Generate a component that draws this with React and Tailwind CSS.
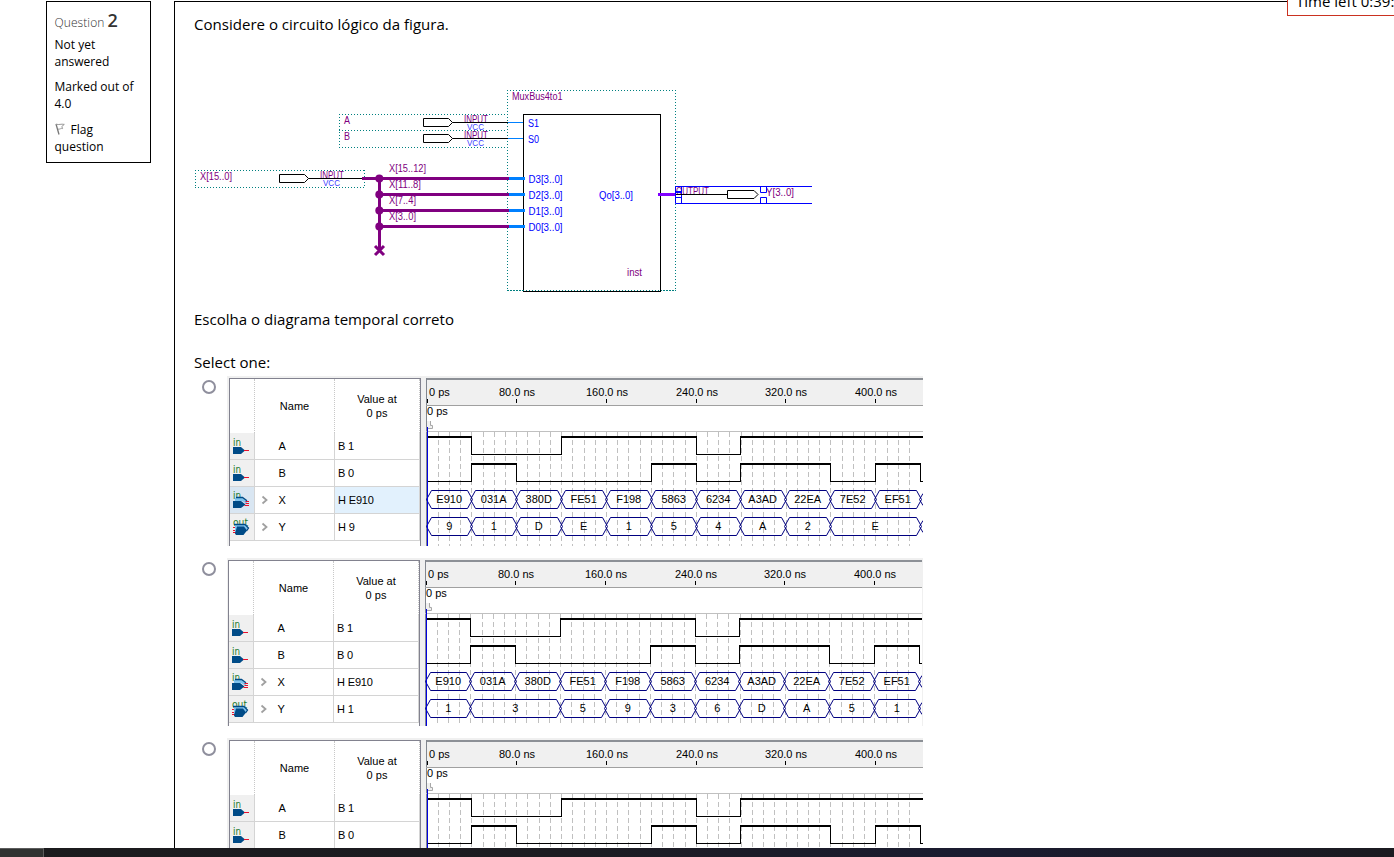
import React from "react";

const ARIAL = '"Liberation Sans", Arial, sans-serif';

/* ---------- Circuit schematic ---------- */

function Label({ x, y, w, fill = "#800080", size = 10, children }) {
  return (
    <text x={x} y={y} fill={fill} fontSize={size} fontFamily={ARIAL} textLength={w} lengthAdjust="spacingAndGlyphs">
      {children}
    </text>
  );
}

function InputPin({ x, y, end }) {
  return (
    <g>
      <Label x={x + 40.5} y={y + 0.5} w={24}>INPUT</Label>
      <Label x={x + 43.5} y={y + 7} w={17} size={9} fill="#3c3cff">VCC</Label>
      <path d={`M${x} ${y - 4}H${x + 25}L${x + 29} ${y}L${x + 25} ${y + 4}H${x}Z`} fill="#fff" stroke="#000" />
      <path d={`M${x + 29} ${y}H${end}`} stroke="#000" />
    </g>
  );
}

const BUS_ROWS = [
  { y: 178.5, net: "X[15..12]", netW: 37, port: "D3[3..0]" },
  { y: 194.5, net: "X[11..8]", netW: 32, port: "D2[3..0]" },
  { y: 210.5, net: "X[7..4]", netW: 27, port: "D1[3..0]" },
  { y: 226.5, net: "X[3..0]", netW: 27, port: "D0[3..0]" },
];

function Circuit() {
  return (
    <svg className="block" width="640" height="212" viewBox="194 85 640 212" fill="none">
      <g stroke="#008080" strokeDasharray="1 2" shapeRendering="crispEdges">
        <path d="M507 90.5H676M507 290.5H676M507.5 90V291M675.5 90V291" />
        <path d="M339 114.5H507M339 130.5H507M339 147.5H507M339.5 114V148" />
        <path d="M195 170.5H365M195 187.5H365M195.5 170V188M364.5 170V188" />
      </g>
      <rect x="523.5" y="114.5" width="137" height="177" fill="#fff" stroke="#000" />
      <path d="M508 290.5H675" stroke="#008080" strokeDasharray="1 2" shapeRendering="crispEdges" />

      <Label x={512} y={99.5} w={50.5}>MuxBus4to1</Label>
      <Label x={344} y={123.5} w={6}>A</Label>
      <Label x={344} y={139.5} w={6}>B</Label>
      <Label x={200} y={179.5} w={32}>X[15..0]</Label>
      <InputPin x={423.5} y={122.5} end={508} />
      <InputPin x={423.5} y={138.5} end={508} />
      <InputPin x={279.5} y={178.5} end={364} />
      <path d="M508 122.5H523M508 138.5H523" stroke="#0080ff" />
      <Label x={528} y={126.5} w={11} fill="#0000ff">S1</Label>
      <Label x={528} y={142.5} w={11} fill="#0000ff">S0</Label>

      <path d="M362 178.5H510M379.5 178V250" stroke="#800080" strokeWidth="3" />
      <path d="M375 246L384 255M384 246L375 255" stroke="#800080" strokeWidth="3" />
      {BUS_ROWS.map((r) => (
        <g key={r.port}>
          <path d={`M379 ${r.y}H510`} stroke="#800080" strokeWidth="3" />
          <path d={`M509 ${r.y}H525`} stroke="#0080ff" strokeWidth="3" />
          <circle cx="379.3" cy={r.y} r="4" fill="#800080" />
          <Label x={389} y={r.y - 7} w={r.netW}>{r.net}</Label>
          <Label x={528.5} y={r.y + 4} w={34} fill="#0000ff">{r.port}</Label>
        </g>
      ))}
      <Label x={599} y={198.5} w={34} fill="#0000ff">Qo[3..0]</Label>
      <Label x={627} y={275.5} w={15}>inst</Label>
      <path d="M658 194.5H676" stroke="#8000ff" strokeWidth="3" />

      <Label x={676} y={194.5} w={33}>OUTPUT</Label>
      <Label x={766} y={195.5} w={28}>Y[3..0]</Label>
      <g stroke="#0000ff">
        <path d="M812 186.5H675.5V203.5H812" />
        <path d="M681.5 186.5V203.5M676 191.5H681M676 197.5H681M676 192.5H681" />
        <path d="M760.5 187V192.5H766.5V187M760.5 203V197.5H766.5V203" />
      </g>
      <path d="M676 194.5H727M727.5 190.5H754L758 194.5L754 198.5H727.5Z" stroke="#000" />
    </svg>
  );
}

/* ---------- Waveform viewer ---------- */

function PinIcon({ kind }) {
  const label = kind === "out" ? "out" : "in";
  return (
    <svg className="block" width="24" height="26" viewBox="0 0 24 26">
      <text
        x={3}
        y={kind === "in" ? 13 : 12}
        fontSize={kind === "out" ? 10 : 11}
        fontFamily='"DejaVu Sans", sans-serif'
        fill="#1b7a2b"
        textLength={kind === "out" ? 15 : 8}
        lengthAdjust="spacingAndGlyphs"
      >
        {label}
      </text>
      {kind === "in" && (
        <g>
          <path d="M3 14H11L15 17.5L11 21H3Z" fill="#004b87" />
          <path d="M14 17.5H19" stroke="#e8112d" />
        </g>
      )}
      {kind === "bus" && (
        <g>
          <path d="M5 11H12.5L17 14V17L12 14H5Z" fill="#7fc4ee" />
          <path d="M6 10.5H12.5L17 13.8" stroke="#004b87" strokeWidth="1.3" fill="none" />
          <path d="M3 14H11L15.5 17.5L11 21H3Z" fill="#004b87" />
          <path d="M15.5 14.5H19M15.5 16.5H19M14.5 18.5H19" stroke="#e8112d" />
        </g>
      )}
      {kind === "out" && (
        <g>
          <path d="M3 13.5H6M3 16.5H6M3 18.5H6" stroke="#e8112d" />
          <path d="M5 10H15L18.5 13.5L15 18H5Z" fill="#7fc4ee" />
          <path d="M4 10.5H15L18.5 14L16.5 17" stroke="#004b87" strokeWidth="1.3" fill="none" />
          <path d="M7 12.5H14L17 16.5L13.5 21H6L5 19.5Z" fill="#004b87" />
        </g>
      )}
    </svg>
  );
}

function Chevron() {
  return (
    <svg className="block" width="8" height="10" viewBox="0 0 8 10" fill="none">
      <path d="M1.5 1.5L5.5 5L1.5 8.5" stroke="#a0a0a0" strokeWidth="1.8" />
    </svg>
  );
}

function SignalTable({ values, selected }) {
  const rows = [
    ["in", "A"],
    ["in", "B"],
    ["bus", "X"],
    ["out", "Y"],
  ];
  return (
    <div className="flex w-[192px] flex-col border-x border-t border-[#82828f] bg-white text-[11px] text-black">
      <div className="grid h-[54px] shrink-0 grid-cols-[25px_80px_85px]">
        <div className="border-r border-dotted border-[#c8c8c8]" />
        <div className="flex items-center justify-center border-r border-dotted border-[#c8c8c8]">Name</div>
        <div className="flex items-center justify-center border-r border-dotted border-[#c8c8c8] text-center leading-[14px]">
          Value at
          <br />0 ps
        </div>
      </div>
      {rows.map(([kind, name], i) => {
        const on = selected === i;
        return (
          <div key={name} className="grid h-[27px] shrink-0 grid-cols-[25px_80px_85px]">
            <div className={"border-b border-r border-[#d4d4d4] " + (on ? "bg-[#d9e6f2]" : "bg-[#f0f0f0]")}>
              <PinIcon kind={kind} />
            </div>
            <div className="flex items-center border-b border-r border-[#d4d4d4]">
              <div className="w-[23.5px] pl-[6px]">{i > 1 && <Chevron />}</div>
              {name}
            </div>
            <div className={"flex items-center border-b border-r border-[#d4d4d4] pl-[3px] tracking-[-0.15px] " + (on ? "bg-[#e2f1fd]" : "")}>
              {values[i]}
            </div>
          </div>
        );
      })}
    </div>
  );
}

/* Pixel column of each 40 ns step inside the waveform pane. */
const EDGES = [1, 45, 90, 135, 180, 225, 270, 314, 359, 404, 449, 494];
const TICKS = ["0 ps", "80.0 ns", "160.0 ns", "240.0 ns", "320.0 ns", "400.0 ns"];
const A_BITS = [1, 0, 0, 1, 1, 1, 0, 1, 1, 1, 1, 1];
const B_BITS = [0, 1, 0, 0, 0, 1, 0, 1, 1, 0, 1, 0];
const X_BUS = ["E910", "031A", "380D", "FE51", "F198", "5863", "6234", "A3AD", "22EA", "7E52", "EF51"].map((v) => [v, 1]);

function Bits({ bits, top }) {
  const hi = top + 1;
  const lo = top + 18.5;
  return (
    <g shapeRendering="crispEdges">
      {bits.map((b, i) => {
        const x0 = EDGES[i];
        const x1 = i + 1 < EDGES.length ? EDGES[i + 1] : 497;
        return (
          <g key={i} stroke="#000">
            <path d={`M${x0} ${b ? hi : lo}H${x1 + 1}`} strokeWidth={b ? 2 : 1} />
            {i > 0 && bits[i - 1] !== b && <path d={`M${x0 + 0.5} ${top}V${top + 19}`} />}
          </g>
        );
      })}
    </g>
  );
}

function Bus({ items, top }) {
  const mid = top + 9.5;
  const t = top + 0.5;
  const b = top + 18.5;
  let step = 0;
  const cells = items.map(([label, span]) => {
    const cell = { label, x0: EDGES[step], x1: EDGES[step + span] };
    step += span;
    return cell;
  });
  return (
    <g stroke="#000080" fill="none">
      {cells.map((c, i) => (
        <g key={i}>
          <path
            d={`M${c.x0 - 0.5} ${mid}L${c.x0 + 4.5} ${t}H${c.x1 - 3.5}L${c.x1 + 1.5} ${mid}L${c.x1 - 3.5} ${b}H${c.x0 + 4.5}Z`}
          />
          <text x={(c.x0 + c.x1) / 2 + 0.2} y={top + 13} fontSize="11" textAnchor="middle" fill="#000" stroke="none" fontFamily={ARIAL}>
            {c.label}
          </text>
        </g>
      ))}
      <path d={`M493.5 ${mid}L497 ${t + 3}M493.5 ${mid}L497 ${b - 3}`} />
    </g>
  );
}

function WavePane({ y }) {
  const grid = Array.from({ length: 43 }, (_, i) => Math.floor(1 + (i + 1) * 11.22) + 0.5);
  return (
    <svg className="block" width="497" height="168" viewBox="0 0 497 168">
      <rect width="497" height="168" fill="#fff" />
      <rect width="497" height="27" fill="#f0f0f0" />
      <path d="M0 1H497" stroke="#8c9096" strokeWidth="2" />
      <path d="M0.5 0V168" stroke="#82878f" />
      <path d="M0 27.5H497" stroke="#a0a0a0" />
      <path d="M0 53.5H497" stroke="#c0c0c0" />
      <g stroke="#c0c0c0" strokeDasharray="5 3" shapeRendering="crispEdges">
        {grid.map((x) => (
          <path key={x} d={`M${x} 54V168`} />
        ))}
      </g>
      {TICKS.map((t, i) => {
        const x = EDGES[i * 2];
        return (
          <g key={t}>
            <path d={`M${x + 0.5} 21V25`} stroke="#000" />
            <text x={i ? x + 1 : 3} y="18" fontSize="11" textAnchor={i ? "middle" : "start"} fontFamily={ARIAL}>
              {t}
            </text>
          </g>
        );
      })}
      <text x="1" y="37" fontSize="11" fontFamily={ARIAL}>0 ps</text>
      <path d="M1 43H4.5V46.5H6V50H1Z" fill="#f0f0f0" />
      <path d="M4.5 43V47.5H6.5V50.5H1" stroke="#a8a8a8" fill="none" />
      <Bits bits={A_BITS} top={58} />
      <Bits bits={B_BITS} top={85} />
      <Bus items={X_BUS} top={112} />
      <Bus items={y} top={139} />
      <path d="M1.5 49V168" stroke="#0000e0" />
    </svg>
  );
}

function Option({ size, shift, values, selected, y }) {
  return (
    <div className={"flex items-start " + size}>
      <div className="mt-[4px] h-[14px] w-[14px] shrink-0 rounded-full border-2 border-[#8f8f9d] bg-white" />
      <div className={"flex w-[696px] shrink-0 overflow-hidden bg-[#f0f0f0] pt-[2px] " + shift}>
        <SignalTable values={values} selected={selected} />
        <div className="ml-[5px]">
          <WavePane y={y} />
        </div>
      </div>
    </div>
  );
}

function Flag() {
  return (
    <svg className="mr-[6px] inline-block align-[-1px]" width="10" height="12" viewBox="0 0 10 12" fill="none">
      <path d="M1 1L4 11.5" stroke="#777" strokeWidth="1.3" />
      <path d="M1.2 1.2C4 2.2 6 0.6 9.3 1.4L6.8 3.5L7.6 5.6C6 5 5 6.4 3 6.2" stroke="#999" />
    </svg>
  );
}

const Y1 = [["9", 1], ["1", 1], ["D", 1], ["E", 1], ["1", 1], ["5", 1], ["4", 1], ["A", 1], ["2", 1], ["E", 2]];
const Y2 = [["1", 1], ["3", 2], ["5", 1], ["9", 1], ["3", 1], ["6", 1], ["D", 1], ["A", 1], ["5", 1], ["1", 1]];

export default function App() {
  return (
    <div className="relative flex h-[857px] w-[1394px] flex-col overflow-hidden bg-white font-['Open_Sans',sans-serif] text-black">
      <div className="flex h-[848px] items-start overflow-hidden pl-[46px] pt-px">
        <aside className="h-[162px] w-[105px] shrink-0 border border-black pl-[7.5px] pt-[6px] text-[12px] leading-[17px]">
          <h3 className="h-[24px] leading-[24px] text-[#333]">
            <span className="font-light tracking-[0.08px]">Question</span> <span className="text-[18px] font-semibold">2</span>
          </h3>
          <p className="mt-[4px]">Not yet<br />answered</p>
          <p className="mt-[8px]">Marked out of<br />4.0</p>
          <p className="mt-[9px]"><Flag />Flag<br />question</p>
        </aside>
        <main className="ml-[23px] h-[900px] w-[1240px] shrink-0 border border-black pl-[19px] text-[15.05px] leading-[22px]">
          <p className="mt-[11px]">Considere o circuito lógico da figura.</p>
          <div className="mt-[50px] h-[212px]"><Circuit /></div>
          <p className="mt-[11px]">Escolha o diagrama temporal correto</p>
          <p className="mt-[21px]">Select one:</p>
          <div className="pl-[8px] pt-[3px] font-['Liberation_Sans',sans-serif] leading-normal">
            <Option size="h-[182px]" shift="h-[170px] ml-[11px] pl-[2px]" values={["B 1", "B 0", "H E910", "H 9"]} selected={2} y={Y1} />
            <Option size="h-[180px]" shift="h-[168px] ml-[11px] pl-px" values={["B 1", "B 0", "H E910", "H 1"]} selected={-1} y={Y2} />
            <Option size="h-[182px]" shift="h-[170px] ml-[11px] pl-[2px]" values={["B 1", "B 0", "H E910", "H 9"]} selected={-1} y={Y1} />
          </div>
        </main>
      </div>
      <footer className="h-[9px] shrink-0 bg-[linear-gradient(90deg,#1b1b1d,#1c1b21_40%,#1a1b30_70%,#1b1a20)]">
        <div className="h-[9px] w-[44px] border-r border-t border-[#5c5c5c] bg-[#303231]" />
      </footer>
      <div className="absolute -top-[14px] right-[-20px] h-[30px] w-[127px] overflow-hidden whitespace-nowrap border border-[#ca3120] bg-white pl-[8px] pt-[3px] text-[15px] leading-[22px]">
        Time left 0:39:12
      </div>
    </div>
  );
}
